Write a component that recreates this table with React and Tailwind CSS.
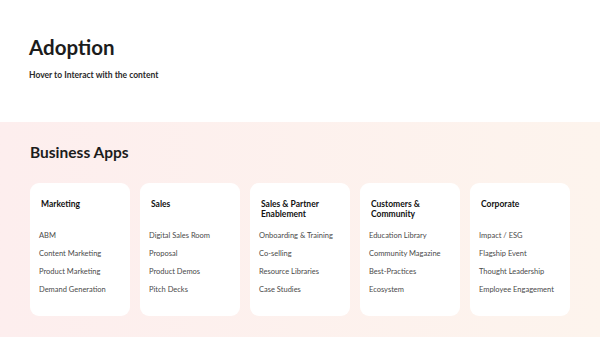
import React from "react";

const apps = [
  {
    title: "Marketing",
    items: ["ABM", "Content Marketing", "Product Marketing", "Demand Generation"],
  },
  {
    title: "Sales",
    items: ["Digital Sales Room", "Proposal", "Product Demos", "Pitch Decks"],
  },
  {
    title: "Sales & Partner Enablement",
    items: ["Onboarding & Training", "Co-selling", "Resource Libraries", "Case Studies"],
  },
  {
    title: "Customers & Community",
    items: ["Education Library", "Community Magazine", "Best-Practices", "Ecosystem"],
  },
  {
    title: "Corporate",
    items: ["Impact / ESG", "Flagship Event", "Thought Leadership", "Employee Engagement"],
  },
];

const App = () => {
  return (
    <div className="w-[600px] h-[337px] overflow-hidden bg-white font-['Lato','Liberation_Sans',sans-serif] text-[#1c1c1c]">
      {/* Header */}
      <div className="h-[122px] px-[29px] pt-[35px]">
        <h1 className="text-[20.5px] leading-[25px] font-bold">Adoption</h1>
        <p className="mt-[9px] text-[8.5px] leading-[12px] font-bold text-[#2a2a2a]">
          Hover to Interact with the content
        </p>
      </div>

      {/* Business apps */}
      <div className="h-[215px] bg-gradient-to-r from-[#fdeeee] to-[#fdf4ed] px-[30px] pt-[21px]">
        <h2 className="text-[15.5px] leading-[19px] font-bold">Business Apps</h2>
        <div className="mt-[21px] flex gap-[10px]">
          {apps.map((app) => (
            <div
              key={app.title}
              className="w-[100px] h-[133px] bg-white rounded-[9px] pl-[9px] pr-[6px] pt-[16px]"
            >
              <div className="h-[28px] ml-[2px] text-[8.5px] leading-[10px] font-bold text-[#111] pr-[6px]">
                {app.title}
              </div>
              <ul>
                {app.items.map((item) => (
                  <li
                    key={item}
                    className="text-[7.5px] leading-[18px] text-[#4a4a4a] whitespace-nowrap"
                  >
                    {item}
                  </li>
                ))}
              </ul>
            </div>
          ))}
        </div>
      </div>
    </div>
  );
};

export default App;
